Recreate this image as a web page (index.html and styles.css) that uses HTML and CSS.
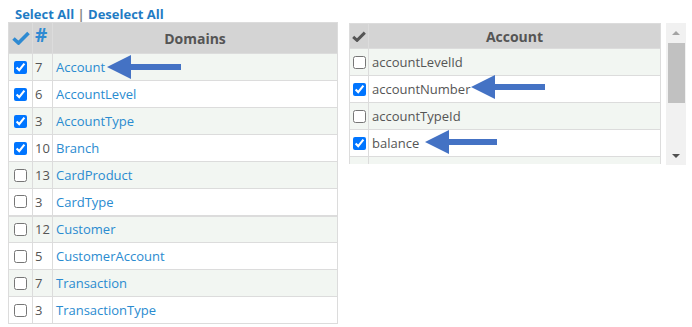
FILE: index.html
```html
<!DOCTYPE html>
<html lang="en">
<head>
  <meta charset="UTF-8" />
  <title>Domains</title>
  <link rel="stylesheet" href="styles.css">
</head>
<body>

  <div class="page">
    <div class="left">
      <div class="select-links">
        <a href="#">Select All</a> | <a href="#">Deselect All</a>
      </div>

      <table class="grid domains">
        <thead>
          <tr>
            <th class="col-check">
              <svg width="18" height="14" viewBox="0 0 18 14"><path d="M1.5 7.5 L6.5 12 L16.5 2" fill="none" stroke="#2e8ad2" stroke-width="3.6"/></svg>
            </th>
            <th class="col-num">#</th>
            <th>Domains</th>
          </tr>
        </thead>
        <tbody>
          <tr><td class="col-check"><input type="checkbox" checked></td><td class="col-num">7</td><td><a href="#">Account</a></td></tr>
          <tr><td class="col-check"><input type="checkbox" checked></td><td class="col-num">6</td><td><a href="#">AccountLevel</a></td></tr>
          <tr><td class="col-check"><input type="checkbox" checked></td><td class="col-num">3</td><td><a href="#">AccountType</a></td></tr>
          <tr><td class="col-check"><input type="checkbox" checked></td><td class="col-num">10</td><td><a href="#">Branch</a></td></tr>
          <tr><td class="col-check"><input type="checkbox"></td><td class="col-num">13</td><td><a href="#">CardProduct</a></td></tr>
          <tr class="group-end"><td class="col-check"><input type="checkbox"></td><td class="col-num">3</td><td><a href="#">CardType</a></td></tr>
          <tr><td class="col-check"><input type="checkbox"></td><td class="col-num">12</td><td><a href="#">Customer</a></td></tr>
          <tr><td class="col-check"><input type="checkbox"></td><td class="col-num">5</td><td><a href="#">CustomerAccount</a></td></tr>
          <tr><td class="col-check"><input type="checkbox"></td><td class="col-num">7</td><td><a href="#">Transaction</a></td></tr>
          <tr><td class="col-check"><input type="checkbox"></td><td class="col-num">3</td><td><a href="#">TransactionType</a></td></tr>
        </tbody>
      </table>
    </div>

    <div class="right">
      <div class="scroll-box">
        <table class="grid fields">
          <thead>
            <tr>
              <th class="col-check">
                <svg width="14" height="11" viewBox="0 0 18 14"><path d="M1.5 7.5 L6.5 12 L16.5 2" fill="none" stroke="#555" stroke-width="3.8"/></svg>
              </th>
              <th>Account</th>
            </tr>
          </thead>
          <tbody>
            <tr><td class="col-check"><input type="checkbox"></td><td>accountLevelId</td></tr>
            <tr><td class="col-check"><input type="checkbox" checked></td><td>accountNumber</td></tr>
            <tr><td class="col-check"><input type="checkbox"></td><td>accountTypeId</td></tr>
            <tr><td class="col-check"><input type="checkbox" checked></td><td>balance</td></tr>
            <tr><td class="col-check"><input type="checkbox"></td><td>branchId</td></tr>
          </tbody>
        </table>
      </div>

      <div class="scrollbar">
        <span class="arrow-up"></span>
        <div class="thumb"></div>
        <span class="arrow-down"></span>
      </div>
    </div>

    <!-- callout arrows -->
    <svg class="callout c1" width="74" height="24" viewBox="0 0 74 24"><polygon points="0,12 24,0 24,9 74,9 74,15 24,15 24,24" fill="#4472c4"/></svg>
    <svg class="callout c2" width="74" height="24" viewBox="0 0 74 24"><polygon points="0,12 24,0 24,9 74,9 74,15 24,15 24,24" fill="#4472c4"/></svg>
    <svg class="callout c3" width="72" height="24" viewBox="0 0 72 24"><polygon points="0,12 24,0 24,9 72,9 72,15 24,15 24,24" fill="#4472c4"/></svg>
  </div>

</body>
</html>
```

FILE: styles.css
```css
* {
  margin: 0;
  padding: 0;
  box-sizing: border-box;
}

body {
  font-family: "Open Sans", "Liberation Sans", sans-serif;
  font-size: 13px;
  color: #555;
  background-color: #fff;
}

.page {
  position: relative;
  display: flex;
  align-items: flex-start;
  gap: 11px;
  padding: 6px 0 0 8px;
}

.select-links {
  padding-left: 7px;
  height: 16px;
  line-height: 16px;
  font-weight: bold;
  color: #888;
}

.select-links a {
  color: #1f7cc4;
  text-decoration: none;
}

.grid {
  border-collapse: collapse;
  table-layout: fixed;
}

.grid th,
.grid td {
  border: 1px solid #dcdcdc;
  text-align: left;
  padding: 0 3px;
  white-space: nowrap;
}

.grid th {
  background-color: #d4d4d4;
  color: #555;
  font-weight: bold;
  font-size: 14px;
  text-align: center;
}

.grid tbody tr:nth-child(odd) td {
  background-color: #f2f6f2;
}

.grid tbody tr td {
  height: 27px;
}

.grid td a {
  color: #2a8bd0;
  text-decoration: none;
}

.grid input[type="checkbox"] {
  display: block;
  width: 13px;
  height: 13px;
  margin: 0 auto;
}

.domains {
  width: 330px;
}

.domains th {
  height: 31px;
}

.domains .col-check {
  width: 24px;
  padding: 0;
}

.domains .col-num {
  width: 20px;
  padding: 0 0 0 2px;
}

.domains th.col-num {
  color: #2e8ad2;
  font-size: 19px;
  text-align: left;
  vertical-align: top;
  line-height: 24px;
}

.domains th.col-check svg {
  display: block;
  margin: 0 auto;
}

.domains .group-end td {
  border-bottom: 2px solid #dcdcdc;
}

.right {
  display: flex;
  gap: 5px;
  margin-top: 17px;
}

.scroll-box {
  width: 312px;
  height: 141px;
  overflow: hidden;
}

.fields {
  width: 312px;
}

.fields th {
  height: 25px;
}

.fields .col-check {
  width: 19px;
  padding: 0;
}

.fields th.col-check svg {
  display: block;
  margin: 0 auto;
}

.fields td {
  padding-left: 3px;
}

.scrollbar {
  width: 20px;
  height: 142px;
  background-color: #f1f1f1;
  display: flex;
  flex-direction: column;
  align-items: center;
}

.arrow-up,
.arrow-down {
  width: 0;
  height: 0;
  border-left: 4px solid transparent;
  border-right: 4px solid transparent;
}

.arrow-up {
  margin-top: 8px;
  border-bottom: 4px solid #a3a3a3;
}

.arrow-down {
  margin-top: auto;
  margin-bottom: 7px;
  border-top: 4px solid #505050;
}

.thumb {
  width: 17px;
  height: 60px;
  margin-top: 8px;
  background-color: #c1c1c1;
}

.callout {
  position: absolute;
}

.c1 {
  left: 107px;
  top: 55px;
}

.c2 {
  left: 471px;
  top: 75px;
}

.c3 {
  left: 425px;
  top: 130px;
}
```
